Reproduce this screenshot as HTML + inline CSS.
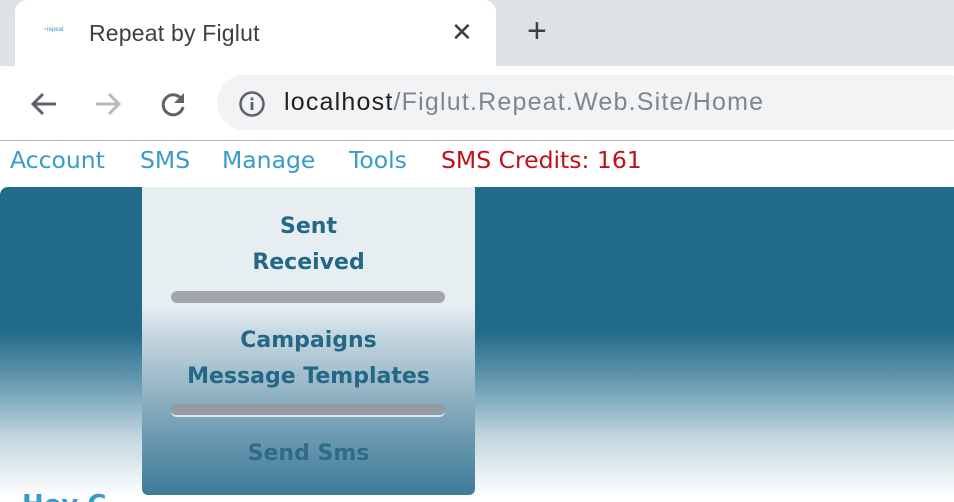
<!DOCTYPE html>
<html style="width:954px;height:502px;overflow:hidden"><head><meta charset="utf-8"><style>
*{margin:0;padding:0;box-sizing:border-box}
body{width:954px;height:502px;overflow:hidden;background:#fff;font-family:"Liberation Sans","DejaVu Sans",sans-serif;position:relative}
.abs{position:absolute;white-space:nowrap}
.nav{position:absolute;top:146px;font-family:"DejaVu Sans",sans-serif;font-size:23.5px;color:#3a9bc9}
</style></head><body>
<div class="abs" style="left:0;top:0;width:954px;height:66px;background:#dee1e6"></div>
<div class="abs" style="left:15px;top:0;width:481px;height:70px;background:#fff;border-radius:12px 12px 0 0"></div>
<div class="abs" style="left:0;top:66px;width:954px;height:74px;background:#fff"></div>
<div class="abs" style="left:43px;top:27px;font-size:6px;color:#3a9bc9">◔repeat</div>
<div class="abs" style="left:89px;top:20px;font-size:23px;color:#3c4043;letter-spacing:0.2px">Repeat by Figlut</div>
<div class="abs" style="left:451px;top:17px;font-size:26px;color:#3c4043">✕</div>
<div class="abs" style="left:527px;top:12px;font-size:34px;color:#3c4043">+</div>
<svg class="abs" style="left:28px;top:88px" width="32" height="32" viewBox="0 0 32 32"><path d="M28 16H6M15 6L5 16l10 10" stroke="#5f6368" stroke-width="3" fill="none"/></svg>
<svg class="abs" style="left:92px;top:88px" width="32" height="32" viewBox="0 0 32 32"><path d="M4 16h22M17 6l10 10-10 10" stroke="#b7b9bc" stroke-width="3" fill="none"/></svg>
<svg class="abs" style="left:157px;top:88px" width="32" height="32" viewBox="0 0 32 32"><path d="M25 12A10 10 0 1 0 26 19" stroke="#5f6368" stroke-width="3" fill="none"/><path d="M27 5v10H17z" fill="#5f6368"/></svg>
<div class="abs" style="left:217px;top:75px;width:760px;height:55px;background:#f1f3f4;border-radius:28px"></div>
<svg class="abs" style="left:238px;top:90px" width="28" height="28" viewBox="0 0 28 28"><circle cx="14" cy="14" r="11.5" stroke="#5f6368" stroke-width="2.6" fill="none"/><rect x="12.6" y="12" width="2.8" height="8" fill="#5f6368"/><rect x="12.6" y="7.5" width="2.8" height="2.8" fill="#5f6368"/></svg>
<div class="abs" style="left:284px;top:88px;font-size:25px;color:#202124;letter-spacing:1.2px">localhost<span style="color:#80868b">/Figlut.Repeat.Web.Site/Home</span></div>
<div class="abs" style="left:0;top:140px;width:954px;height:1px;background:#b5b5b5"></div>
<div class="nav" style="left:10px">Account</div>
<div class="nav" style="left:140px">SMS</div>
<div class="nav" style="left:222px">Manage</div>
<div class="nav" style="left:349px">Tools</div>
<div class="nav" style="left:441px;color:#c0101a">SMS Credits: 161</div>
<div class="abs" style="left:0;top:187px;width:954px;height:315px;border-radius:8px 0 0 0;background:linear-gradient(#226a8a 0,#226a8a 145px,#6f9fb5 200px,#c2d6df 250px,#fff 310px)"></div>
<div class="abs" style="left:22px;top:490px;font-family:'DejaVu Sans',sans-serif;font-size:26px;line-height:30px;font-weight:bold;color:#3a9bc9">Hey C</div>
<div class="abs" style="left:142px;top:187px;width:333px;height:308px;border-radius:0 0 6px 6px;background:linear-gradient(#e7eef2 0,#e7eef2 118px,#c3d5de 150px,#8fb1c2 210px,#6b9ab0 250px,#3f7b98 308px);text-align:center;font-family:'DejaVu Sans',sans-serif;font-weight:bold;font-size:22px;color:#236987;line-height:36px">
<div style="position:absolute;top:22px;width:100%">Sent<br>Received</div>
<div style="position:absolute;left:29px;top:104px;width:274px;height:12px;border-radius:6px;background:#a1a7a9"></div>
<div style="position:absolute;top:136px;width:100%">Campaigns<br>Message Templates</div>
<div style="position:absolute;left:29px;top:217px;width:274px;height:13px;border-radius:6px;background:#939ca1;border-bottom:2px solid #dde6ea"></div>
<div style="position:absolute;top:249px;width:100%;color:#2f6b88">Send Sms</div>
</div>
</body></html>
